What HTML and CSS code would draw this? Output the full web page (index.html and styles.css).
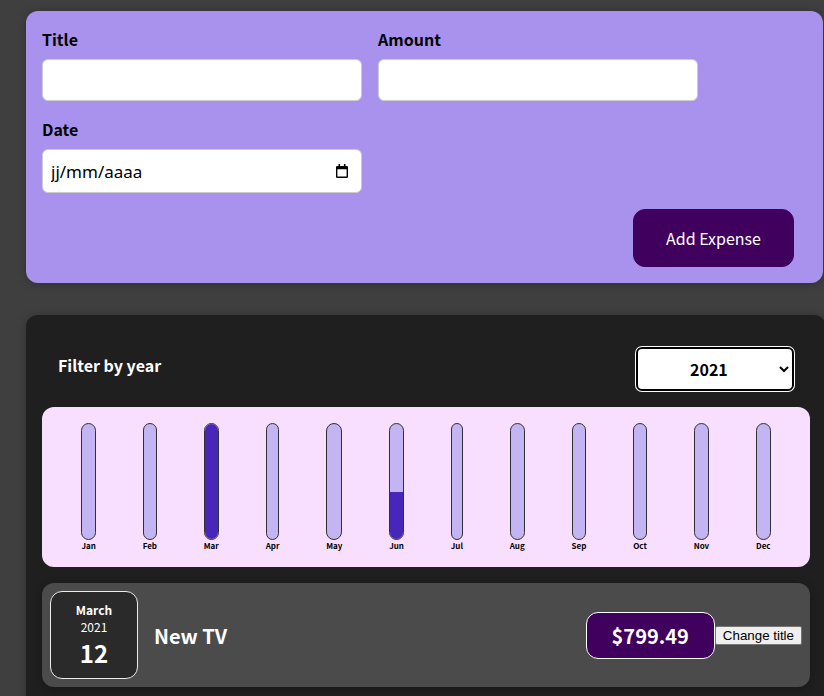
FILE: index.html
```html
<!DOCTYPE html>
<html lang="en">
<head>
<meta charset="utf-8">
<title>Expenses</title>
<link rel="stylesheet" href="styles.css">
</head>
<body>
<div class="app">
  <div class="new-expense">
    <form>
      <div class="controls">
        <div class="control">
          <label>Title</label>
          <input type="text">
        </div>
        <div class="control">
          <label>Amount</label>
          <input type="text">
        </div>
        <div class="control">
          <label>Date</label>
          <div class="date-field">
            <input type="text" placeholder="jj/mm/aaaa">
            <svg class="cal-icon" width="12" height="14" viewBox="0 0 12 14" aria-hidden="true">
              <rect x="2.5" y="0" width="1.6" height="2.6" fill="#000"/>
              <rect x="7.9" y="0" width="1.6" height="2.6" fill="#000"/>
              <path fill="#000" fill-rule="evenodd" d="M1.2 2h9.6A1.2 1.2 0 0 1 12 3.2v9.6a1.2 1.2 0 0 1-1.2 1.2H1.2A1.2 1.2 0 0 1 0 12.8V3.2A1.2 1.2 0 0 1 1.2 2zM1.4 5.2v7.4h9.2V5.2z"/>
            </svg>
          </div>
        </div>
      </div>
      <div class="actions">
        <button type="button" class="btn-primary">Add Expense</button>
      </div>
    </form>
  </div>

  <div class="expenses">
    <div class="filter">
      <div class="filter-control">
        <label>Filter by year</label>
        <select>
          <option>2022</option>
          <option selected>2021</option>
          <option>2020</option>
          <option>2019</option>
        </select>
      </div>
    </div>

    <div class="chart">
      <div class="bar"><div class="bar-inner"><div class="bar-fill" style="height:0%"></div></div><div class="bar-label">Jan</div></div>
      <div class="bar"><div class="bar-inner"><div class="bar-fill" style="height:0%"></div></div><div class="bar-label">Feb</div></div>
      <div class="bar"><div class="bar-inner"><div class="bar-fill" style="height:100%"></div></div><div class="bar-label">Mar</div></div>
      <div class="bar"><div class="bar-inner"><div class="bar-fill" style="height:0%"></div></div><div class="bar-label">Apr</div></div>
      <div class="bar"><div class="bar-inner"><div class="bar-fill" style="height:0%"></div></div><div class="bar-label">May</div></div>
      <div class="bar"><div class="bar-inner"><div class="bar-fill" style="height:41.13%"></div></div><div class="bar-label">Jun</div></div>
      <div class="bar"><div class="bar-inner"><div class="bar-fill" style="height:0%"></div></div><div class="bar-label">Jul</div></div>
      <div class="bar"><div class="bar-inner"><div class="bar-fill" style="height:0%"></div></div><div class="bar-label">Aug</div></div>
      <div class="bar"><div class="bar-inner"><div class="bar-fill" style="height:0%"></div></div><div class="bar-label">Sep</div></div>
      <div class="bar"><div class="bar-inner"><div class="bar-fill" style="height:0%"></div></div><div class="bar-label">Oct</div></div>
      <div class="bar"><div class="bar-inner"><div class="bar-fill" style="height:0%"></div></div><div class="bar-label">Nov</div></div>
      <div class="bar"><div class="bar-inner"><div class="bar-fill" style="height:0%"></div></div><div class="bar-label">Dec</div></div>
    </div>

    <ul class="expense-list">
      <li class="expense-item">
        <div class="expense-date">
          <div class="date-month">March</div>
          <div class="date-year">2021</div>
          <div class="date-day">12</div>
        </div>
        <div class="description">
          <h2>New TV</h2>
          <div class="price">$799.49</div>
        </div>
        <button type="button" class="change-btn">Change title</button>
      </li>
    </ul>
  </div>
</div>
</body>
</html>
```

FILE: styles.css
```css
html, body {
  overflow-x: hidden;
}

body {
  margin: 0;
  padding-top: 11px;
  background: #3f3f3f;
  font-family: "Noto Sans CJK JP", "Noto Sans", sans-serif;
}

.new-expense {
  box-sizing: border-box;
  width: 797px;
  margin: 0 0 32px 26px;
  padding: 16px;
  background: #a892ee;
  border-radius: 12px;
  box-shadow: 0 1px 8px rgba(0, 0, 0, 0.25);
}

.controls {
  display: flex;
  flex-wrap: wrap;
  gap: 16px;
  margin-bottom: 16px;
}

.control label {
  display: block;
  font-weight: bold;
  font-size: 16px;
  line-height: 24px;
  margin-bottom: 8px;
  color: #000;
}

.control > input {
  box-sizing: border-box;
  width: 320px;
  height: 42px;
  padding: 8px;
  font: inherit;
  border: 1px solid #ccc;
  border-radius: 6px;
  background: #fff;
}

.date-field {
  box-sizing: border-box;
  display: flex;
  align-items: center;
  width: 320px;
  height: 44px;
  padding: 0 13px 0 8px;
  border: 1px solid #ccc;
  border-radius: 6px;
  background: #fff;
}

.date-field input {
  flex: 1;
  min-width: 0;
  border: 0;
  padding: 0;
  font-family: "Noto Sans", sans-serif;
  font-size: 17px;
  color: #000;
  outline: none;
  background: transparent;
}

.date-field input::placeholder {
  color: #000;
  opacity: 1;
}

.cal-icon {
  display: block;
  flex: none;
}

.actions {
  display: flex;
  justify-content: flex-end;
}

.btn-primary {
  box-sizing: border-box;
  width: 161px;
  height: 58px;
  margin-right: 13px;
  padding: 0;
  font: inherit;
  font-size: 16px;
  color: #fff;
  background: #40005d;
  border: 1px solid #40005d;
  border-radius: 12px;
  cursor: pointer;
}

.expenses {
  box-sizing: border-box;
  width: 800px;
  margin-left: 26px;
  padding: 16px;
  background: #1f1f1f;
  border-radius: 12px;
  box-shadow: 0 1px 8px rgba(0, 0, 0, 0.25);
}

.filter {
  color: #fff;
  padding: 0 16px;
}

.filter-control {
  display: flex;
  align-items: center;
  justify-content: space-between;
  margin: 16px 0;
}

.filter-control label {
  font-weight: bold;
  font-size: 16px;
  margin-bottom: 8px;
}

.filter-control select {
  box-sizing: border-box;
  width: 158px;
  height: 44px;
  padding: 0 8px 0 48px;
  font: inherit;
  font-weight: bold;
  font-size: 16px;
  color: #000;
  background: #fff;
  border: 2px solid #000;
  border-radius: 6px;
  box-shadow: 0 0 0 1px #fff;
}

.chart {
  box-sizing: border-box;
  display: flex;
  justify-content: space-around;
  height: 160px;
  padding: 16px;
  background: #f8dfff;
  border-radius: 12px;
}

.bar {
  height: 100%;
  display: flex;
  flex-direction: column;
  align-items: center;
}

.bar-inner {
  box-sizing: border-box;
  flex: 1;
  width: 100%;
  display: flex;
  flex-direction: column;
  justify-content: flex-end;
  overflow: hidden;
  background: #c3b4f3;
  border: 1px solid #313131;
  border-radius: 12px;
}

.bar-fill {
  width: 100%;
  background: #4826b9;
}

.bar-label {
  font-weight: bold;
  font-size: 8px;
  line-height: 11px;
  color: #000;
  text-align: center;
}

.expense-list {
  list-style: none;
  margin: 0;
  padding: 0;
}

.expense-item {
  display: flex;
  align-items: center;
  justify-content: space-between;
  margin: 16px 0;
  padding: 8px;
  background: #4b4b4b;
  border-radius: 12px;
  box-shadow: 0 2px 8px rgba(0, 0, 0, 0.25);
}

.expense-date {
  box-sizing: border-box;
  display: flex;
  flex-direction: column;
  align-items: center;
  justify-content: center;
  width: 88px;
  height: 88px;
  color: #fff;
  background: #2a2a2a;
  border: 1px solid #ececec;
  border-radius: 12px;
}

.date-month {
  font-size: 12px;
  font-weight: bold;
}

.date-year {
  font-size: 12px;
}

.date-day {
  font-size: 24px;
  font-weight: bold;
}

.description {
  flex: 1;
  display: flex;
  align-items: center;
}

.description h2 {
  flex: 1;
  margin: 0 16px;
  font-size: 20px;
  color: #fff;
}

.price {
  padding: 8px 25px;
  font-size: 20px;
  font-weight: bold;
  color: #fff;
  background: #40005d;
  border: 1px solid #fff;
  border-radius: 12px;
}

.change-btn {
  padding: 1px 7px;
  font-family: "Liberation Sans", Arial, sans-serif;
  font-size: 13.33px;
  color: #000;
  background: #efefef;
  border: 1px solid #767676;
  border-radius: 2px;
}
```
